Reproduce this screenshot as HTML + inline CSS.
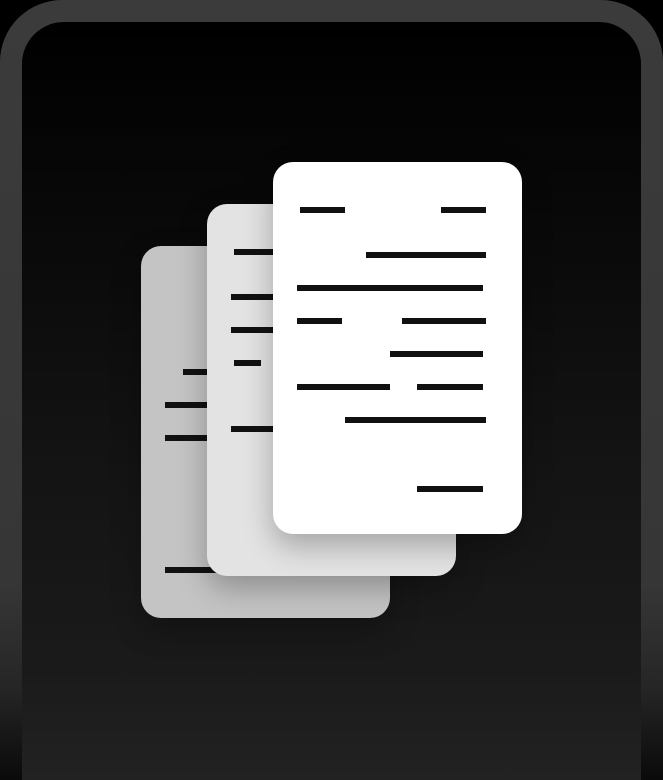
<!DOCTYPE html>
<html><head><style>
html,body{margin:0;padding:0;background:#000;width:663px;height:780px;overflow:hidden;}
body{position:relative;}
.outer{position:absolute;left:0;top:0;width:663px;height:780px;border-radius:62px 62px 0 0;background:linear-gradient(#3b3b3b 0%,#363636 75%,#262626 88%,#0a0a0a 100%);}
.inner{position:absolute;left:22px;top:22px;width:619px;height:758px;border-radius:42px 42px 0 0;background:linear-gradient(#000 0%,#0a0a0a 30%,#141414 60%,#1a1a1a 85%,#222 100%);}
.pg{position:absolute;border-radius:20px;box-shadow:0 12px 30px rgba(0,0,0,0.28);overflow:hidden;}
.l{position:absolute;height:6px;background:#111;}
</style></head><body>
<div class="outer"></div>
<div class="inner"></div>
<div class="pg" style="left:141px;top:246px;width:249px;height:372px;background:#c4c4c4;">
 <div class="l" style="left:42px;top:123px;width:40px"></div>
 <div class="l" style="left:24px;top:156px;width:60px"></div>
 <div class="l" style="left:24px;top:189px;width:60px"></div>
 <div class="l" style="left:24px;top:321px;width:60px"></div>
</div>
<div class="pg" style="left:207px;top:204px;width:249px;height:372px;background:#e3e3e3;">
 <div class="l" style="left:27px;top:45px;width:60px"></div>
 <div class="l" style="left:24px;top:90px;width:60px"></div>
 <div class="l" style="left:24px;top:123px;width:60px"></div>
 <div class="l" style="left:27px;top:156px;width:27px"></div>
 <div class="l" style="left:24px;top:222px;width:60px"></div>
</div>
<div class="pg" style="left:273px;top:162px;width:249px;height:372px;background:#fff;">
 <div class="l" style="left:27px;top:45px;width:45px"></div>
 <div class="l" style="left:168px;top:45px;width:45px"></div>
 <div class="l" style="left:93px;top:90px;width:120px"></div>
 <div class="l" style="left:24px;top:123px;width:186px"></div>
 <div class="l" style="left:24px;top:156px;width:45px"></div>
 <div class="l" style="left:129px;top:156px;width:84px"></div>
 <div class="l" style="left:117px;top:189px;width:93px"></div>
 <div class="l" style="left:24px;top:222px;width:93px"></div>
 <div class="l" style="left:144px;top:222px;width:66px"></div>
 <div class="l" style="left:72px;top:255px;width:141px"></div>
 <div class="l" style="left:144px;top:324px;width:66px"></div>
</div>
</body></html>
